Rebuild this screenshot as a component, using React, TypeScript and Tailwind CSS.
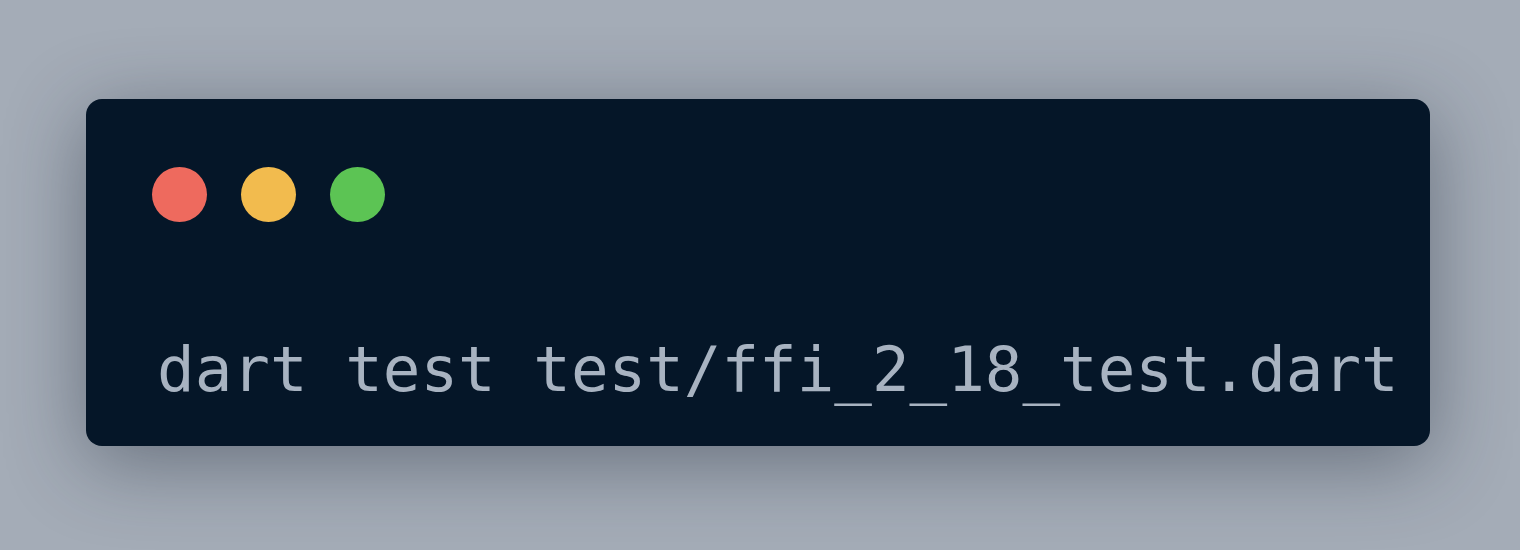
const App = () => {
    return (
        <div className="flex min-h-[550px] items-center justify-center bg-[#a4acb7]">
            <div className="-ml-[4px] -mt-[6px] flex h-[347px] w-[1344px] flex-col rounded-[16px] bg-[#051628] pl-[66px] pt-[68px] shadow-[0_16px_80px_rgba(30,40,55,0.45)]">
                <div className="flex gap-[34px]">
                    <span className="h-[55px] w-[55px] rounded-full bg-[#ee6a5e]" />
                    <span className="h-[55px] w-[55px] rounded-full bg-[#f2bb4e]" />
                    <span className="h-[55px] w-[55px] rounded-full bg-[#5cc454]" />
                </div>
                <p className="ml-[5px] mt-[117px] whitespace-pre font-['DejaVu_Sans_Mono',monospace] text-[62.5px] leading-none text-[#a8b3c1]">
                    dart test test/ffi_2_18_test.dart
                </p>
            </div>
        </div>
    );
};

export default App;
